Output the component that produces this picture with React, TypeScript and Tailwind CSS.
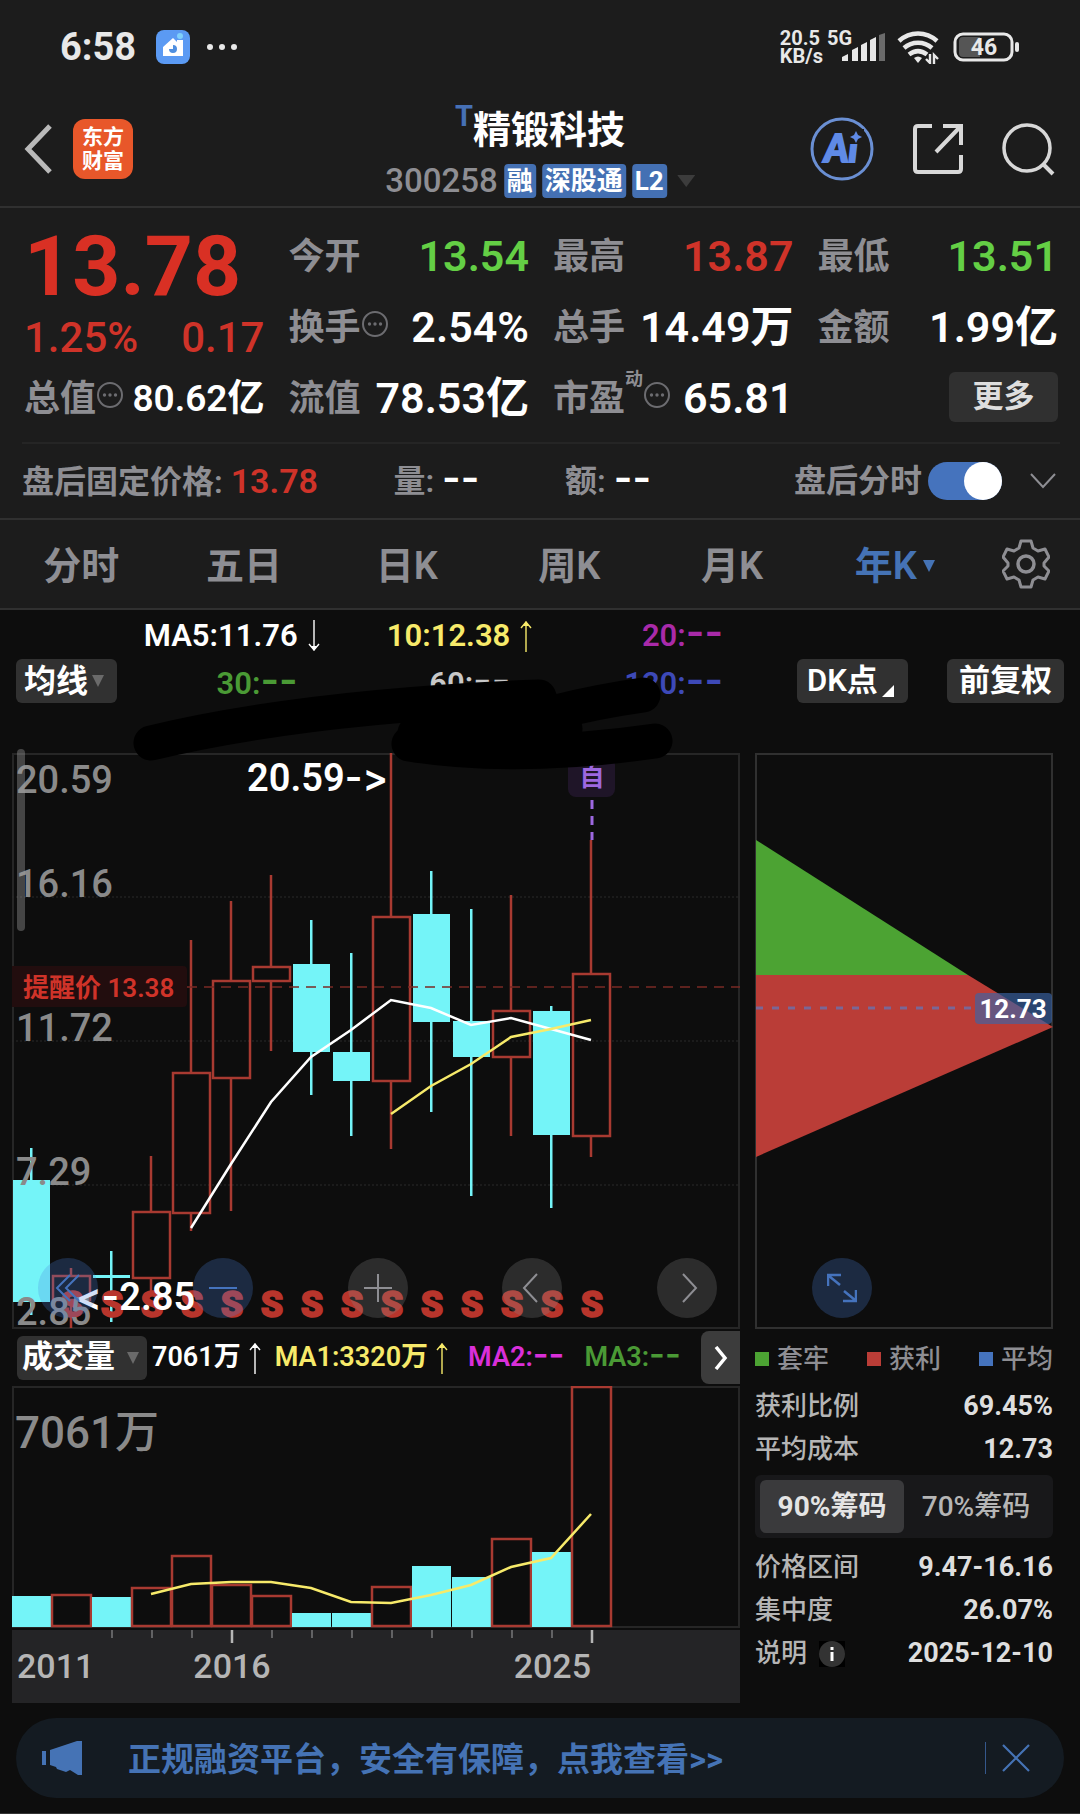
import { useState } from "react";
import type { ReactNode } from "react";

const CYAN = "#74f4f8";
const RED = "#a83a31";
const YELLOW = "#f7ea6a";

// [up, high, bodyTop, bodyBottom, low] on the 575 high canvas
type Candle = [boolean, number, number, number, number];

const CANDLES: Candle[] = [
    [false, 395, 427, 549, 562],
    [true, 515, 523, 547, 575],
    [false, 498, 522, 525, 569],
    [true, 403, 459, 525, 538],
    [true, 187, 320, 460, 478],
    [true, 148, 228, 325, 458],
    [true, 122, 214, 228, 298],
    [false, 167, 211, 299, 342],
    [false, 200, 299, 328, 383],
    [true, 0, 164, 328, 396],
    [false, 118, 161, 269, 359],
    [false, 156, 268, 304, 443],
    [true, 142, 258, 304, 383],
    [false, 253, 258, 382, 455],
    [true, 87, 221, 383, 404],
];

const MA5 = [475, 411, 349, 304, 277, 247, 255, 272, 265, 276, 287];
const MA10 = [361, 333, 311, 284, 276, 267];
const VOLUME_TOPS = [210, 209, 211, 202, 170, 199, 210, 227, 227, 201, 180, 191, 153, 166, 1];
const VOLUME_MA = [208, 198, 196, 196, 202, 216, 217, 209, 199, 181, 172, 128];

const centerX = (i: number) => 19 + i * 40;
const toPoints = (values: number[], start: number) =>
    values.map((v, i) => `${centerX(i + start)},${v}`).join(" ");

function MoreDots() {
    return (
        <svg viewBox="0 0 28 28" className="w-7 h-7 shrink-0 mb-2 text-[#6c6c70]">
            <circle cx="14" cy="14" r="12" fill="none" stroke="currentColor" strokeWidth="2" />
            <circle cx="8.5" cy="14" r="1.7" fill="currentColor" />
            <circle cx="14" cy="14" r="1.7" fill="currentColor" />
            <circle cx="19.5" cy="14" r="1.7" fill="currentColor" />
        </svg>
    );
}

function Caret({ className }: { className: string }) {
    return (
        <svg viewBox="0 0 12 12" preserveAspectRatio="none" className={className}>
            <path d="M0 0H12L6 12Z" fill="currentColor" />
        </svg>
    );
}

function Arrow({ down = false }: { down?: boolean }) {
    return (
        <svg viewBox="0 0 12 32" className={`w-3 h-8 shrink-0 ${down ? "rotate-180" : ""}`}>
            <path d="M6 32V3M1 8L6 2L11 8" fill="none" stroke="currentColor" strokeWidth="1.4" />
            <path d="M3 6L6 1L9 6Z" fill="currentColor" />
        </svg>
    );
}

function Dash({ small = false }: { small?: boolean }) {
    return (
        <span className={`font-['Inter',sans-serif] leading-none ${small ? "text-[34px]" : "text-[40px]"}`}>--</span>
    );
}

function StatusBar() {
    return (
        <div className="flex items-center justify-between h-[94px] pl-15 pr-[59px] text-[#e8e8e8]">
            <div className="flex items-center">
                <span className="text-[38px] leading-10 font-bold">6:58</span>
                <svg viewBox="0 0 34 34" className="w-[34px] h-[34px] ml-5">
                    <rect width="34" height="34" rx="8" fill="#5b9af3" />
                    <path d="M7 17L17 8L21 12V10H27V26H7Z" fill="#fff" />
                    <circle cx="24" cy="6" r="3" fill="#7fd0fb" />
                    <path d="M17 15A4 4 0 1 1 13 19L17 19Z" fill="#4f8fe0" />
                </svg>
                <svg viewBox="0 0 32 8" className="w-8 h-2 ml-4" fill="currentColor">
                    <circle cx="4" cy="4" r="3" />
                    <circle cx="16" cy="4" r="3" />
                    <circle cx="28" cy="4" r="3" />
                </svg>
            </div>
            <div className="flex items-center">
                <div className="text-xl leading-[18px] font-bold">
                    <div>20.5</div>
                    <div>KB/s</div>
                </div>
                <div className="relative w-[58px] h-9 ml-1">
                    <span className="text-xl leading-[18px] font-bold absolute left-0 top-0">5G</span>
                    <svg viewBox="0 0 58 36" className="w-full h-full" fill="currentColor">
                        <path d="M15 32V28L21 25V32Z" />
                        <path d="M25 32V21L31 18V32Z" />
                        <path d="M34 32V16L40 13V32Z" />
                        <path d="M43 32V11L49 8V32Z" />
                        <path d="M52 32V6L58 4V32Z" fill="#6b6b6b" />
                    </svg>
                </div>
                <svg viewBox="0 0 42 34" className="w-[42px] h-[34px] ml-3" fill="none" stroke="currentColor" strokeWidth="4.5">
                    <path d="M2 11C13 1 29 1 40 11" />
                    <path d="M7 18C15 11 27 11 35 18" />
                    <path d="M12 24.500C18 20 24 20 30 24.500" />
                    <path d="M17 28Q21 25 25 28L21 33Z" fill="currentColor" stroke="none" />
                    <path d="M33 24V33L29 29M37 34V25L41 29" strokeWidth="2.400" />
                </svg>
                <svg viewBox="0 0 68 30" className="w-[68px] h-[30px] ml-[14px]">
                    <rect x="2" y="2" width="57" height="26" rx="8" fill="none" stroke="currentColor" strokeWidth="3" />
                    <path d="M10 5H27V25H10Q6 25 6 21V9Q6 5 10 5Z" fill="#555" />
                    <rect x="62" y="10" width="4" height="10" rx="2" fill="currentColor" />
                    <text x="31" y="23" fontSize="23" fontWeight="700" textAnchor="middle" fill="currentColor">46</text>
                </svg>
            </div>
        </div>
    );
}

function TitleBar() {
    return (
        <header className="relative flex items-center justify-between h-[114px] pl-6 pr-[25px] pb-[2px] border-b-2 border-[#303030]">
            <div className="flex items-center">
                <button type="button" aria-label="返回">
                    <svg viewBox="0 0 28 50" className="w-7 h-[50px]" fill="none" stroke="#b9b9b9" strokeWidth="5">
                        <path d="M26 2L4 25L26 48" />
                    </svg>
                </button>
                <div className="flex items-center justify-center text-center w-[60px] h-[60px] ml-[21px] rounded-xl bg-[#e8572a] text-white text-[21px] leading-6 font-bold">
                    东方
                    <br />
                    财富
                </div>
            </div>
            <div className="absolute left-1/2 -translate-x-1/2 flex flex-col items-center pt-1">
                <h1 className="flex items-start text-[38px] leading-[52px] font-bold text-white">
                    <span className="text-[29px] leading-6 text-[#4670b5]">T</span>
                    精锻科技
                </h1>
                <div className="flex items-center gap-[6px] mt-2 text-[26px] leading-[34px] text-white font-bold">
                    <span className="text-[33px] font-medium text-[#8e8e93]">300258</span>
                    <span className="px-[3px] rounded-sm bg-[#4470b3]">融</span>
                    <span className="px-[3px] rounded-sm bg-[#4470b3]">深股通</span>
                    <span className="px-[3px] rounded-sm bg-[#4470b3]">L2</span>
                    <Caret className="w-[18px] h-3 ml-1 text-[#3c3c3c]" />
                </div>
            </div>
            <div className="flex items-center gap-[38px]">
                <button type="button" aria-label="Ai">
                    <svg viewBox="0 0 64 64" className="w-16 h-16">
                        <circle cx="32" cy="32" r="30" fill="none" stroke="#6a8fd3" strokeWidth="3" />
                        <text x="31" y="45" fontSize="37" fontWeight="900" fontStyle="italic" fontFamily="Lato, sans-serif" textAnchor="middle" fill="#5f8ae6" stroke="#5f8ae6" strokeWidth="2">Ai</text>
                        <rect x="39" y="12" width="15" height="15" fill="#1c1c1c" />
                        <path d="M46 14L48 18L52 20L48 22L46 26L44 22L40 20L44 18Z" fill="#5f8ae6" />
                    </svg>
                </button>
                <button type="button" aria-label="分享">
                    <svg viewBox="0 0 52 52" className="w-[52px] h-[52px]" fill="none" stroke="#d8d8d8" strokeWidth="4">
                        <path d="M20 3H6Q3 3 3 6V46Q3 49 6 49H46Q49 49 49 46V32M31 3H49V22M48 4L24 29" />
                    </svg>
                </button>
                <button type="button" aria-label="搜索">
                    <svg viewBox="0 0 53 54" className="w-[53px] h-[54px]" fill="none" stroke="#d8d8d8" strokeWidth="3.500">
                        <circle cx="25" cy="26" r="23" />
                        <path d="M41 42L51 52" strokeWidth="4" />
                    </svg>
                </button>
            </div>
        </header>
    );
}

interface QuoteCellProps {
    label: string;
    value: string;
    color?: string;
    hint?: ReactNode;
    small?: boolean;
}

function QuoteCell({ label, value, color = "text-white", hint, small }: QuoteCellProps) {
    return (
        <div className="flex items-center justify-between h-[71px] whitespace-nowrap">
            <span className="flex items-center text-4xl text-[#8e8e93] font-semibold">
                {label}
                {hint}
            </span>
            <span className={`${small ? "text-[37px]" : "text-[43px]"} font-semibold ${color}`}>{value}</span>
        </div>
    );
}

function Quotes() {
    return (
        <section className="grid grid-cols-4 gap-x-6 pl-6 pr-[22px] pt-[13px] pb-2">
            <div className="row-span-2 h-[142px] pt-[2px] font-medium text-[#cf3329]">
                <div className="text-[84px] leading-[88px] font-bold text-[#d93024]">13.78</div>
                <div className="flex justify-between text-[42px] leading-[54px]">
                    <span>1.25%</span>
                    <span>0.17</span>
                </div>
            </div>
            <QuoteCell label="今开" value="13.54" color="text-[#64cf45]" />
            <QuoteCell label="最高" value="13.87" color="text-[#cf3329]" />
            <QuoteCell label="最低" value="13.51" color="text-[#64cf45]" />
            <QuoteCell label="换手" value="2.54%" hint={<MoreDots />} />
            <QuoteCell label="总手" value="14.49万" />
            <QuoteCell label="金额" value="1.99亿" />
            <QuoteCell label="总值" value="80.62亿" hint={<MoreDots />} small />
            <QuoteCell label="流值" value="78.53亿" />
            <QuoteCell
                label="市盈"
                value="65.81"
                hint={
                    <>
                        <sup className="text-lg leading-5 -top-5">动</sup>
                        <MoreDots />
                    </>
                }
            />
            <div className="flex items-center justify-end">
                <button type="button" className="w-[109px] h-[50px] mb-1 rounded-md bg-[#303030] text-[31px] leading-10 font-bold text-[#dedede]">
                    更多
                </button>
            </div>
        </section>
    );
}

function AfterHours() {
    const [on, setOn] = useState(true);
    return (
        <section className="ml-[22px] mr-5 border-t-2 border-[#252525]">
            <div className="grid grid-cols-[370fr_171fr_228fr_auto] items-center h-[74px] text-[32px] font-semibold text-[#8e8e93] whitespace-nowrap">
                <span>
                    盘后固定价格: <span className="text-[34px] text-[#cf3329]">13.78</span>
                </span>
                <span>
                    量: <span className="text-white"><Dash /></span>
                </span>
                <span>
                    额: <span className="text-white"><Dash /></span>
                </span>
                <div className="flex items-center">
                    <label htmlFor="after-hours">盘后分时</label>
                    <input
                        id="after-hours"
                        type="checkbox"
                        checked={on}
                        onChange={(e) => setOn(e.target.checked)}
                        className="appearance-none w-[74px] h-[38px] ml-[6px] rounded-full bg-[#555] checked:bg-[#4573bd] before:block before:w-[38px] before:h-[38px] before:rounded-full before:bg-white checked:before:ml-9"
                    />
                    <button type="button" aria-label="展开" className="ml-7 mr-1">
                        <svg viewBox="0 0 26 16" className="w-[26px] h-4" fill="none" stroke="#8e8e93" strokeWidth="2">
                            <path d="M1 1L13 14L25 1" />
                        </svg>
                    </button>
                </div>
            </div>
        </section>
    );
}

function PeriodTabs() {
    const tabs = ["分时", "五日", "日K", "周K", "月K", "年K"];
    const [active, setActive] = useState("年K");
    return (
        <nav className="flex h-[92px] border-y-2 border-[#303030] text-[38px] font-semibold text-[#8e8e93]">
            {tabs.map((tab) => (
                <button
                    key={tab}
                    type="button"
                    onClick={() => setActive(tab)}
                    className={`flex flex-1 items-center justify-center pt-1 ${tab === active ? "text-[#4573b5]" : ""}`}
                >
                    {tab}
                    {tab === "年K" && <Caret className="w-3 h-3 ml-[6px]" />}
                </button>
            ))}
            <button type="button" aria-label="设置" className="flex items-center justify-center w-26 pr-1">
                <svg viewBox="0 0 48 50" className="w-12 h-[50px]" fill="none" stroke="#8e8e93" strokeWidth="3" strokeLinejoin="round">
                    <path d="M19 2H29L31 9L36 12L43 10L47 18L42 24V27L47 32L43 40L36 38L31 41L29 48H19L17 41L12 38L5 40L1 32L6 27V24L1 18L5 10L12 12L17 9Z" />
                    <circle cx="24" cy="25" r="8" strokeWidth="3.500" />
                </svg>
            </button>
        </nav>
    );
}

const CHIP = "flex items-center h-11 rounded-md bg-[#313131] text-white font-semibold whitespace-nowrap";

function MaCell({ children, color, arrow }: { children: ReactNode; color: string; arrow?: ReactNode }) {
    return (
        <div className={`relative h-12 text-right whitespace-nowrap ${color}`}>
            {children}
            {arrow && <span className="absolute left-full top-2 ml-[10px]">{arrow}</span>}
        </div>
    );
}

function AverageBar() {
    return (
        <div className="relative flex items-end h-[143px] px-4 pb-[50px]">
            <button type="button" className={`${CHIP} w-[101px] pl-2 gap-1 text-[32px]`}>
                均线
                <Caret className="w-3 h-3 text-[#6a6a6a]" />
            </button>
            <div className="grid grid-cols-3 flex-1 -ml-8 mr-[74px] -mb-[5px] text-[31px] leading-[48px] font-semibold">
                <MaCell color="text-white" arrow={<Arrow down />}>MA5:11.76</MaCell>
                <MaCell color="text-[#f7ea6a]" arrow={<Arrow />}>10:12.38</MaCell>
                <MaCell color="text-[#a92aa9]">20:<Dash /></MaCell>
                <MaCell color="text-[#4a9a35]">30:<Dash /></MaCell>
                <MaCell color="text-[#c8c8c8]">60:<Dash /></MaCell>
                <MaCell color="text-[#3d49b8]">120:<Dash /></MaCell>
            </div>
            <button type="button" className={`${CHIP} w-[111px] pl-[10px] gap-1 text-[31px]`}>
                DK点
                <svg viewBox="0 0 12 12" className="w-3 h-3 mt-5 shrink-0">
                    <path d="M12 0V12H0Z" fill="#fff" />
                </svg>
            </button>
            <button type="button" className={`${CHIP} justify-center w-[117px] ml-[39px] text-[31px]`}>
                前复权
            </button>
            {/* marker strokes */}
            <svg viewBox="0 0 560 110" className="absolute left-[125px] top-[65px] w-[560px] h-[110px] z-10" fill="none" stroke="#000" strokeWidth="35" strokeLinecap="round">
                <path d="M26 68Q180 31 414 22" />
                <path d="M300 42L436 36Q470 27 518 20" />
                <path d="M284 69Q392 86 530 66" />
                <path d="M290 58L440 54" />
            </svg>
        </div>
    );
}

function CandleChart() {
    const labels: [string, number][] = [
        ["20.59", 40],
        ["16.16", 144],
        ["11.72", 288],
        ["7.29", 432],
        ["2.85", 572],
    ];
    return (
        <svg viewBox="0 0 728 576" className="block w-full overflow-visible">
            <rect x="1" y="1" width="726" height="574" fill="none" stroke="#262626" strokeWidth="2" />
            {[144, 288, 432].map((y) => (
                <path key={y} d={`M0 ${y}H728`} stroke="#2a2a2a" strokeDasharray="2 2" />
            ))}
            {CANDLES.map(([up, high, top, bottom, low], i) => {
                const x = centerX(i);
                return up ? (
                    <g key={i} fill="none" stroke={RED} strokeWidth="2.500">
                        <path d={`M${x} ${high}V${top}M${x} ${bottom}V${low}`} />
                        <rect x={x - 18} y={top} width="37" height={bottom - top} />
                    </g>
                ) : (
                    <g key={i} fill={CYAN}>
                        <rect x={x - 1} y={high} width="2.500" height={low - high} />
                        <rect x={x - 18} y={top} width="37" height={bottom - top} />
                    </g>
                );
            })}
            <path d="M175 234H728" stroke="#7a2a25" strokeWidth="1.500" strokeDasharray="10 7" />
            <polyline points={toPoints(MA5, 4)} fill="none" stroke="#fff" strokeWidth="2.500" />
            <polyline points={toPoints(MA10, 9)} fill="none" stroke={YELLOW} strokeWidth="2.500" />
            <g fontSize="36" fontWeight="900" fill="#b8352c" stroke="#b8352c" strokeWidth="1.500" textAnchor="middle">
                {CANDLES.slice(1).map((_, i) => (
                    <text key={i} x={centerX(i + 1) + 1} y="564">S</text>
                ))}
            </g>
            <path d="M0 213H171Q175 213 175 217V250Q175 254 171 254H0Z" fill="#220d0e" />
            <text x="11" y="244" fontSize="26" fontWeight="600" fill="#cf3329">提醒价 13.38</text>
            <g fontSize="38" fontWeight="500" fill="#8a8a8a">
                {labels.map(([text, y]) => (
                    <text key={text} x="4" y={y}>{text}</text>
                ))}
            </g>
            <g fontSize="38" fontWeight="600" fill="#fff" className="[font-feature-settings:'calt'_0]">
                <text x="376" y="38" textAnchor="end">
                    20.59<tspan fontFamily="Inter, sans-serif">-&gt;</tspan>
                </text>
                <text x="64" y="557">
                    <tspan fontFamily="Inter, sans-serif">&lt;-</tspan>2.85
                </text>
            </g>
            <rect x="5" y="-4" width="8" height="182" rx="4" fill="#9a9a9a" fillOpacity="0.400" />
            <rect x="556" y="4" width="47" height="40" rx="8" fill="#1f1528" />
            <text x="580" y="33" fontSize="25" fontWeight="700" textAnchor="middle" fill="#9d68e0">自</text>
            <path d="M580 47V87" stroke="#9d68e0" strokeWidth="3" strokeDasharray="9 7" />
        </svg>
    );
}

const ROUND = "flex items-center justify-center w-[60px] h-[60px] rounded-full";

function ChartControls() {
    const items = [
        { label: "最左", d: "M17 2L4 15L17 28M26 2L13 15L26 28", blue: true },
        { label: "缩小", d: "M1 15H29", blue: true },
        { label: "放大", d: "M1 15H29M15 1V29", blue: false },
        { label: "左移", d: "M20 1L7 15L20 29", blue: false },
        { label: "右移", d: "M11 1L24 15L11 29", blue: false },
    ];
    return (
        <div className="absolute left-[26px] right-[23px] bottom-[11px] flex justify-between">
            {items.map(({ label, d, blue }) => (
                <button
                    key={label}
                    type="button"
                    aria-label={label}
                    className={`${ROUND} ${blue ? "bg-[#4d85e1]/25 text-[#4573bd]" : "bg-[#8c8c8c]/25 text-[#8e8e93]"}`}
                >
                    <svg viewBox="0 0 30 30" className="w-[30px] h-[30px]" fill="none" stroke="currentColor" strokeWidth="2">
                        <path d={d} />
                    </svg>
                </button>
            ))}
        </div>
    );
}

function VolumeBar() {
    return (
        <div className="flex items-center h-[57px] pl-[5px] text-[27px] font-semibold whitespace-nowrap">
            <button type="button" className={`${CHIP} w-[130px] pl-[5px] gap-3 text-[31px]`}>
                成交量
                <Caret className="w-3 h-3 text-[#6a6a6a]" />
            </button>
            <span className="flex items-center gap-2 ml-[5px] text-white">7061万<Arrow /></span>
            <span className="flex items-center gap-2 ml-[14px] text-[#f7ea6a]">MA1:3320万<Arrow /></span>
            <span className="ml-5 text-[#d92fd9]">MA2:<Dash small /></span>
            <span className="ml-5 text-[#4a9a35]">MA3:<Dash small /></span>
            <button type="button" aria-label="更多指标" className="flex items-center justify-center w-[39px] h-[53px] ml-auto rounded-l-lg bg-[#3c3c3c]">
                <svg viewBox="0 0 14 24" className="w-[14px] h-6" fill="none" stroke="#fff" strokeWidth="3.500">
                    <path d="M2 1L11 12L2 23" />
                </svg>
            </button>
        </div>
    );
}

function VolumeChart() {
    return (
        <svg viewBox="0 0 728 317" className="block w-full">
            <rect x="1" y="1" width="726" height="240" fill="none" stroke="#262626" strokeWidth="2" />
            {VOLUME_TOPS.map((top, i) => {
                const up = CANDLES[i][0];
                const x = i * 40;
                return up ? (
                    <rect key={i} x={x} y={top} width="39" height={240 - top} fill="none" stroke={RED} strokeWidth="2.500" />
                ) : (
                    <rect key={i} x={x} y={top} width="39" height={241 - top} fill={CYAN} />
                );
            })}
            <polyline points={toPoints(VOLUME_MA, 3)} fill="none" stroke={YELLOW} strokeWidth="2.500" />
            <text x="3" y="62" fontSize="44" fill="#8a8a8a" fontWeight="500">7061万</text>
            <rect y="244" width="728" height="73" fill="#242426" />
            {Array.from({ length: 13 }, (_, i) => i + 2).map((i) => {
                const major = i === 5 || i === 14;
                return (
                    <path
                        key={i}
                        d={`M${centerX(i) + 1} 244v${major ? 13 : 8}`}
                        stroke={major ? "#b5b5b5" : "#77777a"}
                        strokeWidth={major ? 2.5 : 1.5}
                    />
                );
            })}
            <g fontSize="34" fontWeight="500" fill="#b5b5b5">
                <text x="5" y="292">2011</text>
                <text x="220" y="292" textAnchor="middle">2016</text>
                <text x="579" y="292" textAnchor="end">2025</text>
            </g>
        </svg>
    );
}

function ChipChart() {
    return (
        <div className="relative">
            <svg viewBox="0 0 298 576" className="block w-full">
                <rect x="1" y="1" width="296" height="574" fill="none" stroke="#303030" strokeWidth="2" />
                <path d="M1 87L213 222H1Z" fill="#4ca333" />
                <path d="M1 222H213L298 274L1 404Z" fill="#ba3d37" />
                <path d="M1 255H220" stroke="#7a6796" strokeWidth="3" strokeDasharray="7 9" />
                <rect x="220" y="240" width="77" height="31" rx="4" fill="#3a64a6" fillOpacity="0.650" />
                <text x="258" y="265" fontSize="26" fontWeight="700" textAnchor="middle" fill="#fff">12.73</text>
            </svg>
            <button type="button" aria-label="全屏" className={`${ROUND} absolute left-[57px] bottom-[11px] bg-[#4d85e1]/25`}>
                <svg viewBox="0 0 30 30" className="w-[30px] h-[30px]" fill="none" stroke="#4573bd" strokeWidth="2.500">
                    <path d="M1 13V2H14M2 3L13 12M29 17V28H16M28 27L17 18" />
                </svg>
            </button>
        </div>
    );
}

function InfoRow({ label, value, icon }: { label: string; value: string; icon?: ReactNode }) {
    return (
        <div className="flex items-center justify-between h-[43px] text-[26px] whitespace-nowrap">
            <span className="flex items-center gap-3 font-medium text-[#b5b5b5]">
                {label}
                {icon}
            </span>
            <span className="text-[27px] font-bold text-[#dedede]">{value}</span>
        </div>
    );
}

function ChipInfo() {
    const [range, setRange] = useState("90");
    const legend = [
        { name: "套牢", color: "bg-[#4ca333]" },
        { name: "获利", color: "bg-[#ba3d37]" },
        { name: "平均", color: "bg-[#4573bd]" },
    ];
    const tab = "flex-1 rounded-md text-[28px] whitespace-nowrap";
    return (
        <div>
            <div className="flex items-center justify-between h-14 pt-1 text-[26px] font-medium text-[#8e8e93]">
                {legend.map(({ name, color }) => (
                    <span key={name} className="flex items-center gap-2">
                        <i className={`w-[14px] h-[14px] ${color}`} />
                        {name}
                    </span>
                ))}
            </div>
            <InfoRow label="获利比例" value="69.45%" />
            <InfoRow label="平均成本" value="12.73" />
            <div className="flex h-[63px] mt-1 mb-2 p-[5px] rounded-md bg-[#18181a]">
                {["90", "70"].map((v) => (
                    <button
                        key={v}
                        type="button"
                        onClick={() => setRange(v)}
                        className={`${tab} ${range === v ? "bg-[#3a3a3c] font-bold text-[#e4e4e4]" : "font-medium text-[#b5b5b5]"}`}
                    >
                        {v}%筹码
                    </button>
                ))}
            </div>
            <InfoRow label="价格区间" value="9.47-16.16" />
            <InfoRow label="集中度" value="26.07%" />
            <InfoRow
                label="说明"
                value="2025-12-10"
                icon={
                    <svg viewBox="0 0 26 26" className="w-[26px] h-[26px]">
                        <rect width="26" height="26" fill="#000" />
                        <circle cx="13" cy="13" r="13" fill="#333" />
                        <path d="M13 6v3M13 11v9" stroke="#fff" strokeWidth="3" />
                    </svg>
                }
            />
        </div>
    );
}

function Banner() {
    return (
        <div className="border-b-2 border-[#333] pb-[15px]">
            <div className="flex items-center h-20 mx-4 pl-[26px] pr-[34px] rounded-full bg-[#141b22] text-[#4573b5]">
                <svg viewBox="0 0 40 36" className="w-10 h-9" fill="currentColor">
                    <rect y="11" width="4" height="14" />
                    <path d="M8 10L35 1H40V35H36L28 30L24 32L15 29L14 27L8 25Z" />
                </svg>
                <a href="#" className="ml-[46px] pt-1 text-[33px] leading-10 font-semibold whitespace-nowrap">
                    正规融资平台，安全有保障，点我查看&gt;&gt;
                </a>
                <span className="w-px h-8 ml-auto mr-4 bg-[#35588c]" />
                <button type="button" aria-label="关闭">
                    <svg viewBox="0 0 28 28" className="w-7 h-7" fill="none" stroke="currentColor" strokeWidth="2.200">
                        <path d="M1 1L27 27M27 1L1 27" />
                    </svg>
                </button>
            </div>
        </div>
    );
}

export default function App() {
    return (
        <div className="min-h-screen bg-[#0d0d0d] font-['Roboto','Noto_Sans_CJK_SC',sans-serif]">
            <div className="bg-[#1c1c1c]">
                <StatusBar />
                <TitleBar />
                <Quotes />
                <AfterHours />
                <PeriodTabs />
            </div>
            <AverageBar />
            <main className="grid grid-cols-[728fr_298fr] gap-x-[15px] pl-3 pr-[27px] mb-[15px]">
                <div className="relative">
                    <CandleChart />
                    <ChartControls />
                </div>
                <ChipChart />
                <div>
                    <VolumeBar />
                    <VolumeChart />
                </div>
                <ChipInfo />
            </main>
            <Banner />
        </div>
    );
}
